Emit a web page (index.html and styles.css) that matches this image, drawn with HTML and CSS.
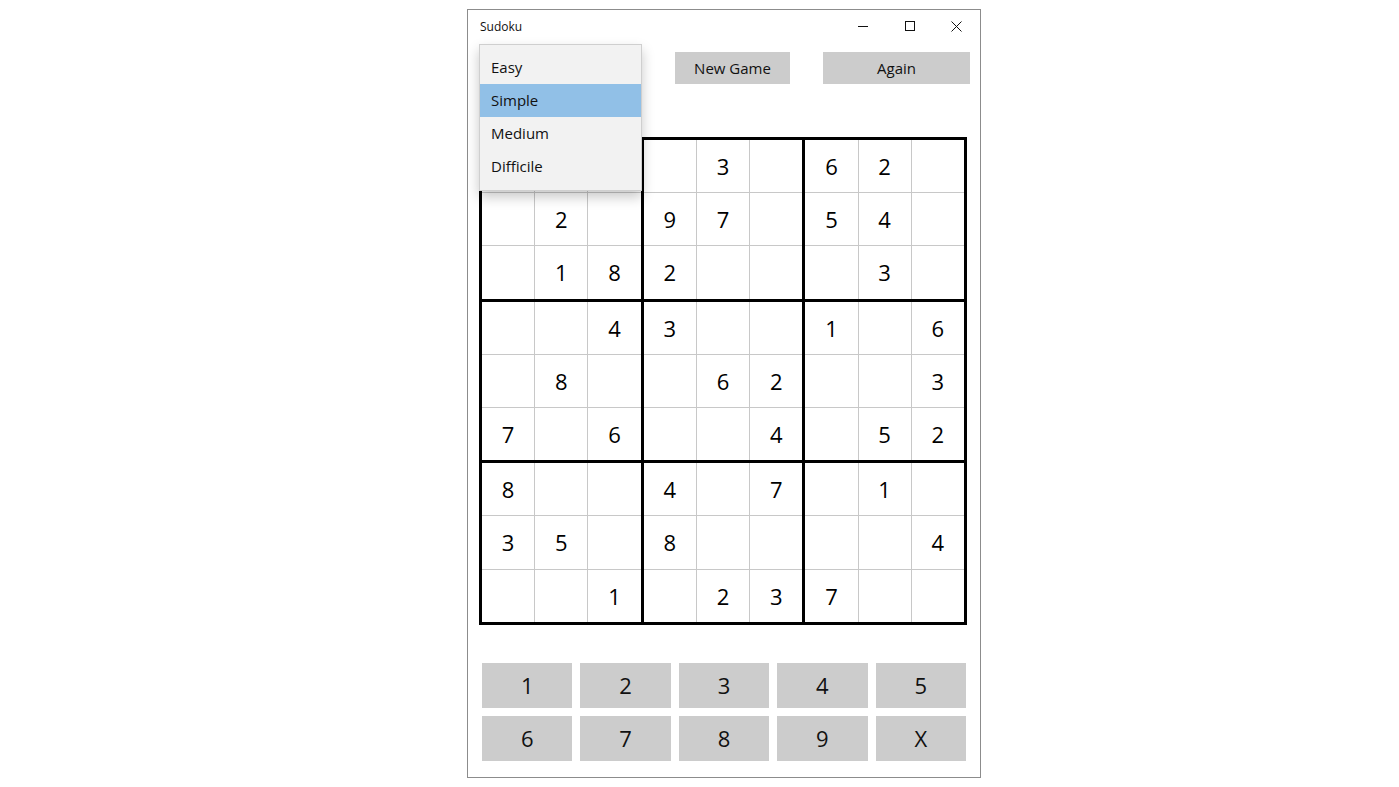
FILE: index.html
```html
<!DOCTYPE html>
<html lang="en">
<head>
<meta charset="utf-8">
<title>Sudoku</title>
<link rel="stylesheet" href="styles.css">
</head>
<body>
<div class="window">
  <div class="titlebar">
    <span class="title">Sudoku</span>
    <div class="caption-buttons">
      <span class="caption-btn">
        <svg width="10" height="10" viewBox="0 0 10 10"><path d="M0 5.5H10" stroke="#111" stroke-width="1"/></svg>
      </span>
      <span class="caption-btn">
        <svg width="10" height="10" viewBox="0 0 10 10"><rect x="0.5" y="0.5" width="9" height="9" fill="none" stroke="#111" stroke-width="1"/></svg>
      </span>
      <span class="caption-btn">
        <svg width="11" height="11" viewBox="0 0 11 11"><path d="M0.5 0.5L10.5 10.5M10.5 0.5L0.5 10.5" stroke="#111" stroke-width="1"/></svg>
      </span>
    </div>
  </div>

  <div class="toolbar">
    <div class="combo">
      <div class="combo-box"></div>
      <ul class="combo-list">
        <li class="combo-item">Easy</li>
        <li class="combo-item selected">Simple</li>
        <li class="combo-item">Medium</li>
        <li class="combo-item">Difficile</li>
      </ul>
    </div>
    <button class="btn btn-new">New Game</button>
    <button class="btn btn-again">Again</button>
  </div>

  <div class="board" id="board"></div>

  <div class="numpad">
    <button class="key">1</button>
    <button class="key">2</button>
    <button class="key">3</button>
    <button class="key">4</button>
    <button class="key">5</button>
    <button class="key">6</button>
    <button class="key">7</button>
    <button class="key">8</button>
    <button class="key">9</button>
    <button class="key">X</button>
  </div>
</div>
<script src="app.js"></script>
</body>
</html>
```

FILE: styles.css
```css
* { box-sizing: border-box; }

body {
  margin: 0;
  background: #ffffff;
  font-family: "Open Sans", "Noto Sans", sans-serif;
  color: #000;
}

.window {
  margin: 9px 0 0 467px;
  width: 514px;
  border: 1px solid #8c8c8c;
  background: #fff;
  padding-bottom: 16px;
}

.titlebar {
  height: 32px;
  display: flex;
  align-items: center;
  justify-content: space-between;
}

.title {
  font-size: 12px;
  padding-left: 12px;
  color: #111;
}

.caption-buttons {
  display: flex;
  align-self: stretch;
}

.caption-btn {
  width: 47px;
  display: flex;
  align-items: center;
  justify-content: center;
}

.toolbar {
  margin-top: 10px;
  padding-left: 11px;
  display: flex;
  align-items: flex-start;
  height: 32px;
}

.combo {
  position: relative;
  width: 162px;
  height: 32px;
}

.combo-box {
  height: 32px;
  border: 1px solid #999;
  background: #fff;
}

.combo-list {
  position: absolute;
  left: 0;
  top: -8px;
  width: 163px;
  margin: 0;
  padding: 6px 0 7px;
  list-style: none;
  background: #f2f2f2;
  border: 1px solid #cfcfcf;
  box-shadow: 0 6px 12px rgba(0, 0, 0, 0.22);
}

.combo-item {
  height: 33px;
  line-height: 32px;
  padding-left: 11px;
  font-size: 15px;
  color: #111;
}

.combo-item.selected {
  background: #91c0e7;
}

.btn {
  height: 32px;
  border: none;
  background: #cccccc;
  font-family: inherit;
  font-size: 15px;
  color: #111;
  padding: 0;
}

.btn-new {
  width: 115px;
  margin-left: 34px;
}

.btn-again {
  width: 147px;
  margin-left: 33px;
}

.board {
  margin: 53px 0 0 11px;
  width: 488px;
  display: grid;
  grid-template-columns: repeat(3, 1fr);
  gap: 3px;
  border: 3px solid #000;
  background: #000;
}

.box {
  display: grid;
  grid-template-columns: repeat(3, 1fr);
  gap: 1px;
  background: #c8c8c8;
}

.cell {
  height: 52.2px;
  background: #fff;
  display: flex;
  align-items: center;
  justify-content: center;
  font-size: 22px;
}

.numpad {
  margin: 38px 0 0 14px;
  width: 484px;
  display: grid;
  grid-template-columns: repeat(5, 1fr);
  column-gap: 8px;
  row-gap: 8px;
}

.key {
  height: 45px;
  border: none;
  background: #cccccc;
  font-family: inherit;
  font-size: 22px;
  color: #111;
  padding: 0;
}
```

FILE: app.js
```js
// Puzzle rows; 0 marks an empty cell.
const puzzle = [
  [0, 0, 0, 0, 3, 0, 6, 2, 0],
  [0, 2, 0, 9, 7, 0, 5, 4, 0],
  [0, 1, 8, 2, 0, 0, 0, 3, 0],
  [0, 0, 4, 3, 0, 0, 1, 0, 6],
  [0, 8, 0, 0, 6, 2, 0, 0, 3],
  [7, 0, 6, 0, 0, 4, 0, 5, 2],
  [8, 0, 0, 4, 0, 7, 0, 1, 0],
  [3, 5, 0, 8, 0, 0, 0, 0, 4],
  [0, 0, 1, 0, 2, 3, 7, 0, 0]
];

const board = document.getElementById('board');
for (let br = 0; br < 3; br++) {
  for (let bc = 0; bc < 3; bc++) {
    const box = document.createElement('div');
    box.className = 'box';
    for (let r = 0; r < 3; r++) {
      for (let c = 0; c < 3; c++) {
        const v = puzzle[br * 3 + r][bc * 3 + c];
        const cell = document.createElement('div');
        cell.className = 'cell';
        cell.textContent = v ? String(v) : '';
        box.appendChild(cell);
      }
    }
    board.appendChild(box);
  }
}
```
